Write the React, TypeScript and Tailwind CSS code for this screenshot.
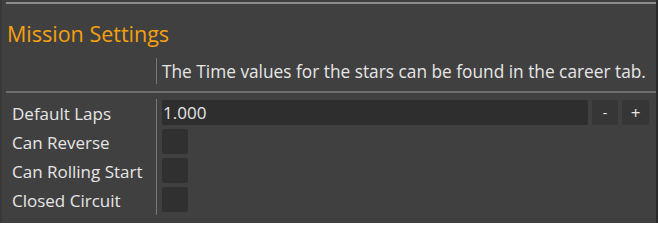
const rows = [
  { label: "Can Reverse" },
  { label: "Can Rolling Start" },
  { label: "Closed Circuit" },
];

export default function App() {
  return (
    <div
      className="w-[658px] h-[223px] bg-[#404040] flex text-[#e6e6e6]"
      style={{ fontFamily: '"Open Sans", "Noto Sans", sans-serif' }}
    >
      <div className="w-[2px] bg-[#383838]" />
      <div className="flex-1 flex flex-col pl-[4px]">
        <div className="mt-[2px] h-[2px] bg-[#8c8c8c]" />

        {/* Header */}
        <div className="pt-[15px] h-[52px] text-[21.5px] leading-[30px] text-[#f5a00f] pl-[1px]">
          Mission Settings
        </div>

        <div className="flex h-[35px]">
          <div className="w-[151px] flex">
            <div className="ml-auto mt-[2px] mb-[7px] w-[1px] bg-[#777]" />
          </div>
          <div className="pl-[5px] pt-[4px] text-[17.3px] leading-[24px]">
            The Time values for the stars can be found in the career tab.
          </div>
        </div>

        <div className="h-[2px] bg-[#6e6e6e]" />

        {/* Settings */}
        <div className="flex mt-[6px]">
          <div className="w-[151px] flex flex-col pl-[6px] border-r border-[#777] text-[17px]">
            <div className="h-[29px] leading-[29px]">Default Laps</div>
            {rows.map((r) => (
              <div key={r.label} className="h-[29px] leading-[29px]">
                {r.label}
              </div>
            ))}
          </div>
          <div className="flex-1 flex flex-col pl-[5px] pt-[1px] gap-[4px]">
            <div className="flex gap-[4px] h-[25px]">
              <div className="flex-1 bg-[#2e2e2e] rounded-[2px] text-[17px] leading-[25px] pl-[1px]">
                1.000
              </div>
              <button className="w-[26px] bg-[#363636] rounded-[2px] text-[14px] leading-[25px]">
                -
              </button>
              <button className="w-[27px] bg-[#363636] rounded-[2px] text-[17px] leading-[25px]">
                +
              </button>
              <div className="w-[3px]" />
            </div>
            {rows.map((r) => (
              <div key={r.label} className="w-[26px] h-[25px] bg-[#303030] rounded-[2px]" />
            ))}
          </div>
        </div>
      </div>
      <div className="w-[2px] bg-[#2a2a2a]" />
    </div>
  );
}
